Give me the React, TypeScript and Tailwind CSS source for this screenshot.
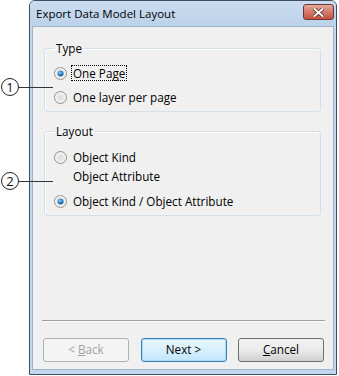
import React from "react";

const FONT = { fontFamily: '"Open Sans", "Noto Sans", sans-serif' };

function Radio({ checked }: { readonly checked?: boolean }) {
  return (
    <svg width="13" height="13" viewBox="0 0 13 13" className="shrink-0">
      <defs>
        <radialGradient id="rbg" cx="50%" cy="50%" r="50%">
          <stop offset="0%" stopColor="#d9d9d9" />
          <stop offset="100%" stopColor="#f8f8f8" />
        </radialGradient>
        <radialGradient id="rdot" cx="40%" cy="35%" r="60%">
          <stop offset="0%" stopColor="#8fd3f7" />
          <stop offset="60%" stopColor="#2a8ad4" />
          <stop offset="100%" stopColor="#1a5a99" />
        </radialGradient>
      </defs>
      <circle cx="6.5" cy="6.5" r="6" fill="url(#rbg)" stroke="#8e8f8f" strokeWidth="1" />
      {checked ? <circle cx="6.5" cy="6.5" r="3" fill="url(#rdot)" /> : null}
    </svg>
  );
}

function Callout({ n, top }: { readonly n: string; readonly top: number }) {
  return (
    <div className="absolute left-[1px] flex items-center" style={{ top }}>
      <div className="flex h-[18px] w-[18px] items-center justify-center rounded-full border border-[#222] text-[13px] leading-none text-[#111]" style={FONT}>
        {n}
      </div>
      <div className="h-px w-[34px] bg-[#333]" />
    </div>
  );
}

export default function App() {
  return (
    <div className="relative h-[376px] w-[339px] bg-white text-[11.7px] text-black" style={FONT}>
      <div className="ml-[29px] flex h-[375px] w-[308px] flex-col overflow-hidden rounded-t-[6px] border border-[#3d4f61] bg-[#c3d7ee]">
        <div className="flex h-[25px] shrink-0 items-center justify-between bg-gradient-to-b from-[#cadcf0] to-[#bcd2ea] pl-[6px] pr-[2px]">
          <span className="text-[11.5px] text-black">Export Data Model Layout</span>
          <div className="mb-[3px] flex h-[16px] w-[31px] items-center justify-center rounded-[3px] border border-[#6b3731] bg-gradient-to-b from-[#e6a89c] via-[#d37a6c] to-[#c4503f]">
            <svg width="11" height="9" viewBox="0 0 11 9">
              <path d="M1.5 1 L9.5 8 M9.5 1 L1.5 8" stroke="#4a2520" strokeWidth="3.4" strokeLinecap="square" />
              <path d="M1.5 1 L9.5 8 M9.5 1 L1.5 8" stroke="#ffffff" strokeWidth="2" strokeLinecap="square" />
            </svg>
          </div>
        </div>
        <div className="mx-[2px] mb-[4px] flex flex-1 flex-col border border-[#9fb3c8] bg-[#f0f0f0] pl-[10px] pr-[9px]">
          <fieldset className="ml-[1px] mr-[3px] mt-[14px] rounded-[3px] border border-[#d5dfe5] px-[9px] pb-[6px] pt-[9px] shadow-[inset_1px_1px_0_#fff]">
            <legend className="px-[2px] leading-[15px]">Type</legend>
            <div className="flex h-[16px] items-center gap-[4px]">
              <Radio checked />
              <span className="border border-dotted border-black px-[1px] leading-[14px]">One Page</span>
            </div>
            <div className="mt-[8px] flex h-[16px] items-center gap-[6px]">
              <Radio />
              <span className="leading-[16px]">One layer per page</span>
            </div>
          </fieldset>
          <fieldset className="ml-[1px] mr-[3px] mt-[12px] rounded-[3px] border border-[#d5dfe5] px-[9px] pb-[6px] pt-[9px] shadow-[inset_1px_1px_0_#fff]">
            <legend className="px-[2px] leading-[15px]">Layout</legend>
            <div className="flex items-start gap-[6px]">
              <div className="pt-[3px]">
                <Radio />
              </div>
              <span className="leading-[19px]">
                Object Kind
                <br />
                Object Attribute
              </span>
            </div>
            <div className="mt-[7px] flex h-[16px] items-center gap-[6px]">
              <Radio checked />
              <span className="leading-[16px]">Object Kind / Object Attribute</span>
            </div>
          </fieldset>
          <div className="flex-1" />
          <div className="-mx-[1px] h-px bg-[#a0a0a0] shadow-[0_1px_0_#fff]" />
          <div className="mb-[7px] mt-[17px] flex justify-between">
            <div className="flex h-[24px] w-[86px] items-center justify-center rounded-[3px] border border-[#adb2b5] bg-[#f4f4f4] text-[#a0a0a0]">
              &lt; <span className="ml-[3px] underline">B</span>ack
            </div>
            <div className="flex h-[24px] w-[86px] items-center justify-center rounded-[3px] border border-[#3c7fb1] bg-gradient-to-b from-[#eaf6fd] via-[#d9f0fc] to-[#bee6fd] shadow-[inset_0_0_0_1px_#a9dbf6]">
              Next &gt;
            </div>
            <div className="flex h-[24px] w-[86px] items-center justify-center rounded-[3px] border border-[#707070] bg-gradient-to-b from-[#f2f2f2] via-[#ebebeb] to-[#cfcfcf]">
              <span className="underline">C</span>ancel
            </div>
          </div>
        </div>
      </div>
      <Callout n="1" top={78} />
      <Callout n="2" top={172} />
    </div>
  );
}
